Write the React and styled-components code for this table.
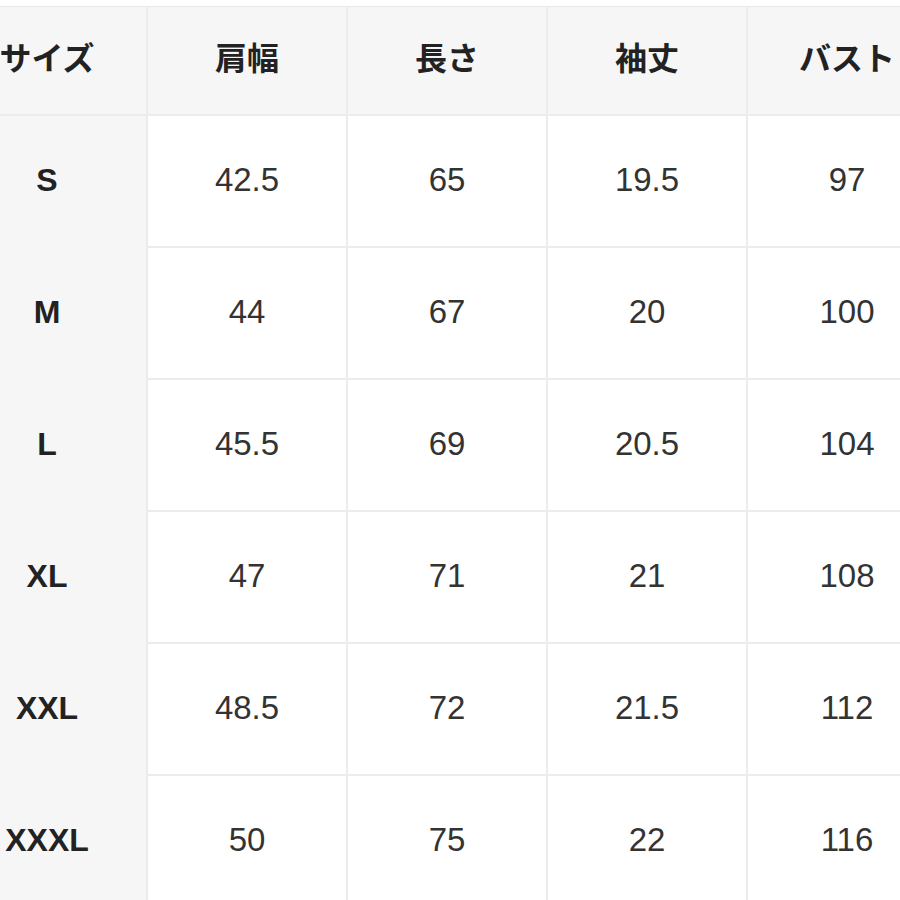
import React from "react";
import styled, { createGlobalStyle } from "styled-components";

const Global = createGlobalStyle`
  html, body { margin: 0; padding: 0; background: #ffffff; }
  body { width: 900px; height: 900px; overflow: hidden; }
`;

const Page = styled.div`
  width: 900px;
  height: 900px;
  overflow: hidden;
  background: #ffffff;
  padding-top: 6px;
  box-sizing: border-box;
`;

const Table = styled.div`
  display: grid;
  grid-template-columns: repeat(5, 200px);
  grid-template-rows: 109px repeat(6, 132px);
  width: 1000px;
  margin-left: -52px;
  border-top: 1px solid #e8e8e8;
`;

const Cell = styled.div`
  box-sizing: border-box;
  display: flex;
  align-items: center;
  justify-content: center;
  padding-bottom: 3px;
  border-right: 2px solid #ececec;
  border-bottom: ${(p) => (p.$noBottom ? "none" : "2px solid #ececec")};
  background: ${(p) => (p.$shaded ? "#f6f6f6" : "#ffffff")};
  color: #2a2a2a;
`;

const HeadCell = styled(Cell)`
  padding-bottom: 10px;
  font-family: "Noto Sans CJK JP", "Noto Sans", sans-serif;
  font-weight: 700;
  font-size: 32px;
  color: #222222;
`;

const SizeCell = styled(Cell)`
  font-family: "Liberation Sans", Arial, sans-serif;
  font-weight: 700;
  font-size: 32px;
  color: #222222;
`;

const ValueCell = styled(Cell)`
  font-family: "Liberation Sans", Arial, sans-serif;
  font-weight: 400;
  font-size: 33px;
  color: #333333;
`;

const headers = ["サイズ", "肩幅", "長さ", "袖丈", "バスト"];
const rows = [
  ["S", "42.5", "65", "19.5", "97"],
  ["M", "44", "67", "20", "100"],
  ["L", "45.5", "69", "20.5", "104"],
  ["XL", "47", "71", "21", "108"],
  ["XXL", "48.5", "72", "21.5", "112"],
  ["XXXL", "50", "75", "22", "116"],
];

export default function App() {
  return (
    <>
      <Global />
      <Page>
        <Table>
          {headers.map((h) => (
            <HeadCell key={h} $shaded>
              {h}
            </HeadCell>
          ))}
          {rows.map((r, i) =>
            r.map((v, j) =>
              j === 0 ? (
                <SizeCell key={`${i}-${j}`} $shaded $noBottom>
                  {v}
                </SizeCell>
              ) : (
                <ValueCell key={`${i}-${j}`}>{v}</ValueCell>
              )
            )
          )}
        </Table>
      </Page>
    </>
  );
}
